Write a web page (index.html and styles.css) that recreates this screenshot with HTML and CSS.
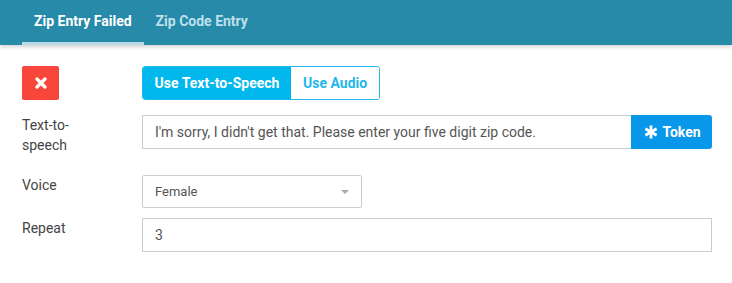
FILE: index.html
```html
<!DOCTYPE html>
<html>
<head>
<meta charset="utf-8">
<link rel="stylesheet" href="styles.css">
</head>
<body>
<header class="tabs">
  <div class="tab active">Zip Entry Failed</div>
  <div class="tab">Zip Code Entry</div>
</header>
<main class="form">
  <div class="row row-top">
    <div class="label"><button class="del" aria-label="Delete"><svg width="12" height="12" viewBox="0 0 12 12"><path d="M2 2 L10 10 M10 2 L2 10" stroke="#fff" stroke-width="3.2" stroke-linecap="round"/></svg></button></div>
    <div class="seg">
      <span class="seg-btn on">Use Text-to-Speech</span>
      <span class="seg-btn">Use Audio</span>
    </div>
  </div>
  <div class="row">
    <div class="label">Text-to-<br>speech</div>
    <div class="group">
      <div class="input grow">I'm sorry, I didn't get that. Please enter your five digit zip code.</div>
      <button class="token"><svg width="14" height="14" viewBox="0 0 14 14"><g stroke="#fff" stroke-width="2.8" stroke-linecap="butt"><path d="M7 0.5 V13.5"/><path d="M1.4 3.8 L12.6 10.2"/><path d="M12.6 3.8 L1.4 10.2"/></g></svg>Token</button>
    </div>
  </div>
  <div class="row">
    <div class="label">Voice</div>
    <div class="input select">Female<span class="caret"></span></div>
  </div>
  <div class="row">
    <div class="label">Repeat</div>
    <div class="input full">3</div>
  </div>
</main>
</body>
</html>
```
FILE: styles.css
```css
* { box-sizing: border-box; }
body {
  margin: 0;
  font-family: Roboto, "Liberation Sans", sans-serif;
  font-size: 14px;
  color: #444;
  background: #fff;
}
.tabs {
  height: 45px;
  background: #268aa8;
  display: flex;
  padding-left: 22px;
  box-shadow: 0 2px 4px rgba(0,0,0,0.18);
}
.tab {
  padding: 0 12px;
  line-height: 42px;
  font-weight: 700;
  font-size: 14px;
  color: #bfe0eb;
  border-bottom: 3px solid transparent;
}
.tab.active {
  color: #fff;
  border-bottom-color: #b9d9e4;
}
.form {
  padding: 21px 20px 0 22px;
}
.row {
  display: flex;
  align-items: flex-start;
  margin-bottom: 10px;
}
.row-top { margin-bottom: 15px; }
.label {
  width: 120px;
  flex: none;
  line-height: 20px;
  padding: 0 0 10px;
  color: #444;
}
.row-top .label { padding: 0; }
.del {
  width: 37px;
  height: 34px;
  border: none;
  border-radius: 2px;
  background: #f8463b;
  display: flex;
  align-items: center;
  justify-content: center;
  padding: 0;
}
.seg {
  display: flex;
  height: 34px;
  border: 1px solid #1fb9ea;
  border-radius: 3px;
  overflow: hidden;
}
.seg-btn {
  font-weight: 700;
  color: #23b7ea;
  line-height: 32px;
  padding: 0 12px;
  background: #fff;
}
.seg-btn.on {
  background: #00b8eb;
  color: #fff;
  width: 148px;
  padding: 0;
  text-align: center;
}
.group {
  display: flex;
  flex: 1;
}
.input {
  height: 34px;
  border: 1px solid #ccc;
  padding: 0 12px;
  line-height: 32px;
  color: #555;
  background: #fff;
}
.grow { flex: 1; border-right: none; }
.token {
  width: 81px;
  height: 34px;
  border: none;
  border-radius: 0 3px 3px 0;
  background: #0897e9;
  color: #fff;
  font-family: inherit;
  font-size: 14px;
  font-weight: 700;
  display: flex;
  align-items: center;
  justify-content: center;
  gap: 4px;
  padding: 0 0 0 2px;
}
.select {
  width: 220px;
  height: 33px;
  line-height: 31px;
  border-radius: 2px;
  font-size: 13px;
  position: relative;
}
.caret {
  position: absolute;
  right: 12px;
  top: 14px;
  border-left: 4px solid transparent;
  border-right: 4px solid transparent;
  border-top: 4px solid #aaa;
}
.full { flex: 1; }
```
